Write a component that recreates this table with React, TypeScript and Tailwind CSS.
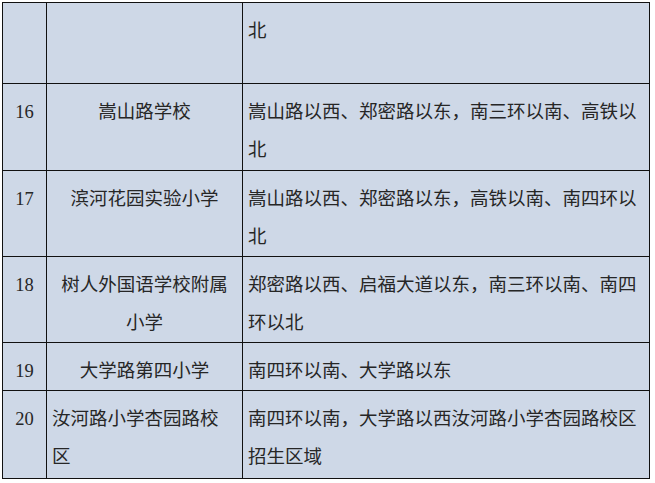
const rows = [
  { no: "", name: [""], nameAlign: "center", desc: ["北"], h: "h-[81px]" },
  {
    no: "16",
    name: ["嵩山路学校"],
    nameAlign: "center",
    desc: ["嵩山路以西、郑密路以东，南三环以南、高铁以", "北"],
    h: "h-[87px]",
  },
  {
    no: "17",
    name: ["滨河花园实验小学"],
    nameAlign: "center",
    desc: ["嵩山路以西、郑密路以东，高铁以南、南四环以", "北"],
    h: "h-[86px]",
  },
  {
    no: "18",
    name: ["树人外国语学校附属", "小学"],
    nameAlign: "center",
    desc: ["郑密路以西、启福大道以东，南三环以南、南四", "环以北"],
    h: "h-[86px]",
  },
  {
    no: "19",
    name: ["大学路第四小学"],
    nameAlign: "center",
    desc: ["南四环以南、大学路以东"],
    h: "h-[48px]",
  },
  {
    no: "20",
    name: ["汝河路小学杏园路校", "区"],
    nameAlign: "left",
    desc: ["南四环以南，大学路以西汝河路小学杏园路校区", "招生区域"],
    h: "h-[88px]",
  },
]

export default function App() {
  return (
    <div className="min-h-screen bg-white pl-[2px] pt-[2px] font-['Liberation_Serif','Noto_Sans_CJK_SC',serif] text-[18.5px] leading-[38px] text-[#262626]">
      <table className="border-collapse bg-[#ced8e7]">
        <tbody>
          {rows.map((r, i) => (
            <tr key={i} className={r.h}>
              <td className="w-[44px] border border-[#111] p-0 pt-[9px] text-center align-top">{r.no}</td>
              <td
                className={
                  "w-[196px] border border-[#111] px-[5px] pt-[9px] pb-0 align-top whitespace-nowrap " +
                  (r.nameAlign === "left" ? "text-left" : "text-center")
                }
              >
                {r.name.map((l, j) => (
                  <div key={j}>{l}</div>
                ))}
              </td>
              <td className="w-[407px] border border-[#111] px-[5px] pt-[9px] pb-0 align-top whitespace-nowrap">
                {r.desc.map((l, j) => (
                  <div key={j}>{l}</div>
                ))}
              </td>
            </tr>
          ))}
        </tbody>
      </table>
    </div>
  )
}
